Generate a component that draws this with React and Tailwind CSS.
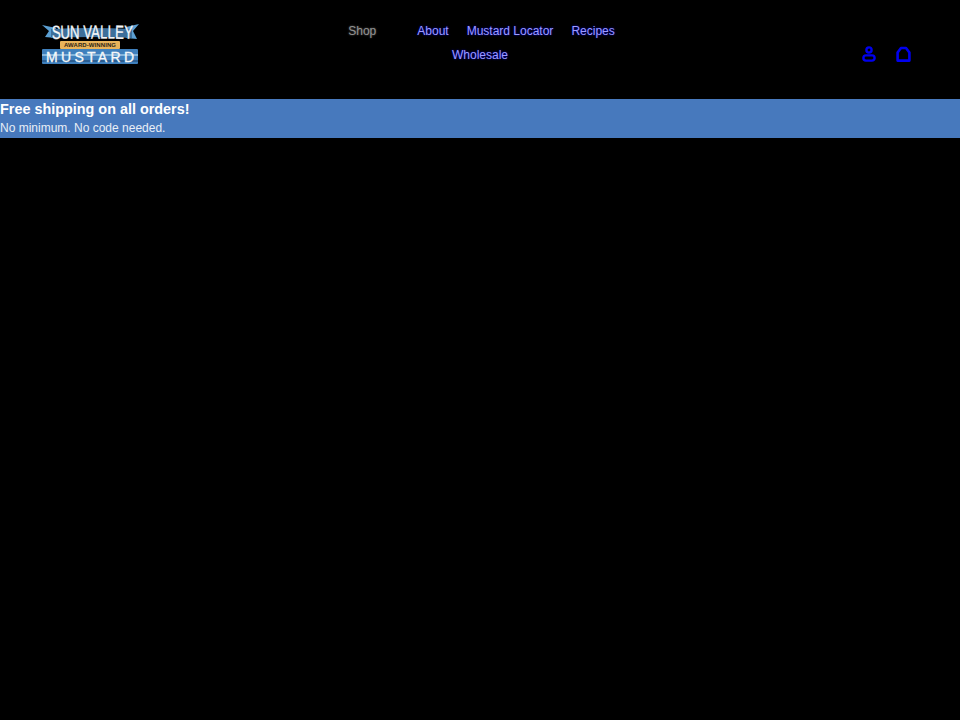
const navLinks = ["About", "Mustard Locator", "Recipes", "Wholesale"];

const Logo = () => (
  <svg width="98" height="46" viewBox="0 0 98 46" className="block overflow-visible">
    <path d="M0 4 L14 7 L14 17 L3 16 L7 10 Z" fill="#5b9fd2" />
    <path d="M97 3 L84 6 L84 17 L95 18 L91 10 Z" fill="#5b9fd2" />
    <path d="M9 8 Q49 6 90 8 L90 17 Q49 15 9 17 Z" fill="#3d6f9a" />
    <defs>
      <path id="arc" d="M10 18 Q50 17 92 18" />
    </defs>
    <text fill="#f4f6f7" fontSize="19" fontFamily="Liberation Sans" stroke="#f4f6f7" strokeWidth="0.3">
      <textPath href="#arc" textLength="81" lengthAdjust="spacingAndGlyphs">
        SUN VALLEY
      </textPath>
    </text>
    <rect x="18" y="20" width="60" height="8" rx="1" fill="#e9b35a" />
    <text x="48" y="26.3" textAnchor="middle" fill="#2f2412" fontSize="6" fontWeight="bold" fontFamily="Liberation Sans" textLength="52">
      AWARD-WINNING
    </text>
    <rect x="0" y="28" width="96" height="15" rx="1" fill="#3f80bd" />
    <rect x="0" y="33" width="96" height="2" fill="#86b6dc" />
    <rect x="0" y="39" width="96" height="2" fill="#2c5f92" />
    <text x="48" y="41" textAnchor="middle" fill="#f6f8f9" fontSize="14" fontFamily="Liberation Sans" stroke="#f6f8f9" strokeWidth="0.3" textLength="88">
      MUSTARD
    </text>
  </svg>
);

const App = () => {
  return (
    <div className="min-h-[720px] bg-black font-['Liberation_Sans',sans-serif]">
      <header className="grid h-[99px] grid-cols-[1fr_300px_1fr] items-start">
        <div className="pl-[42px] pt-[21px]">
          <Logo />
        </div>
        <nav className="mt-[19px] flex flex-wrap justify-center text-[12px] leading-[24px]">
          <a className="pl-[12px] pr-[32px] text-[#909090] [text-shadow:0_0_2px_#666]">Shop</a>
          {navLinks.map((l) => (
            <a key={l} className="px-[9px] text-[#9c9cff] [text-shadow:0_0_2px_#0000ee]">
              {l}
            </a>
          ))}
        </nav>
        <div className="flex items-center justify-end gap-[20px] pr-[49px] pt-[46px] text-[#0000ee]">
          <svg width="14" height="16" viewBox="0 0 14 16" fill="none" stroke="currentColor" strokeWidth="2.4">
            <circle cx="7" cy="4" r="2.6" />
            <path d="M4 14.6a2.6 2.6 0 0 1 0-5.2h6a2.6 2.6 0 0 1 0 5.2z" />
          </svg>
          <svg width="15" height="16" viewBox="0 0 15 16" fill="none" stroke="currentColor" strokeWidth="2.6" strokeLinejoin="round">
            <path d="M1.6 14.6V6.5L5 2h5l3.4 4.5v8.1z" />
          </svg>
        </div>
      </header>
      <div className="h-[39px] bg-[#4779bd] text-white">
        <p className="text-[14.4px] font-bold leading-[20px]">Free shipping on all orders!</p>
        <p className="text-[12px] leading-[19px] text-[#e8eef6]">No minimum. No code needed.</p>
      </div>
    </div>
  );
};

export default App;
